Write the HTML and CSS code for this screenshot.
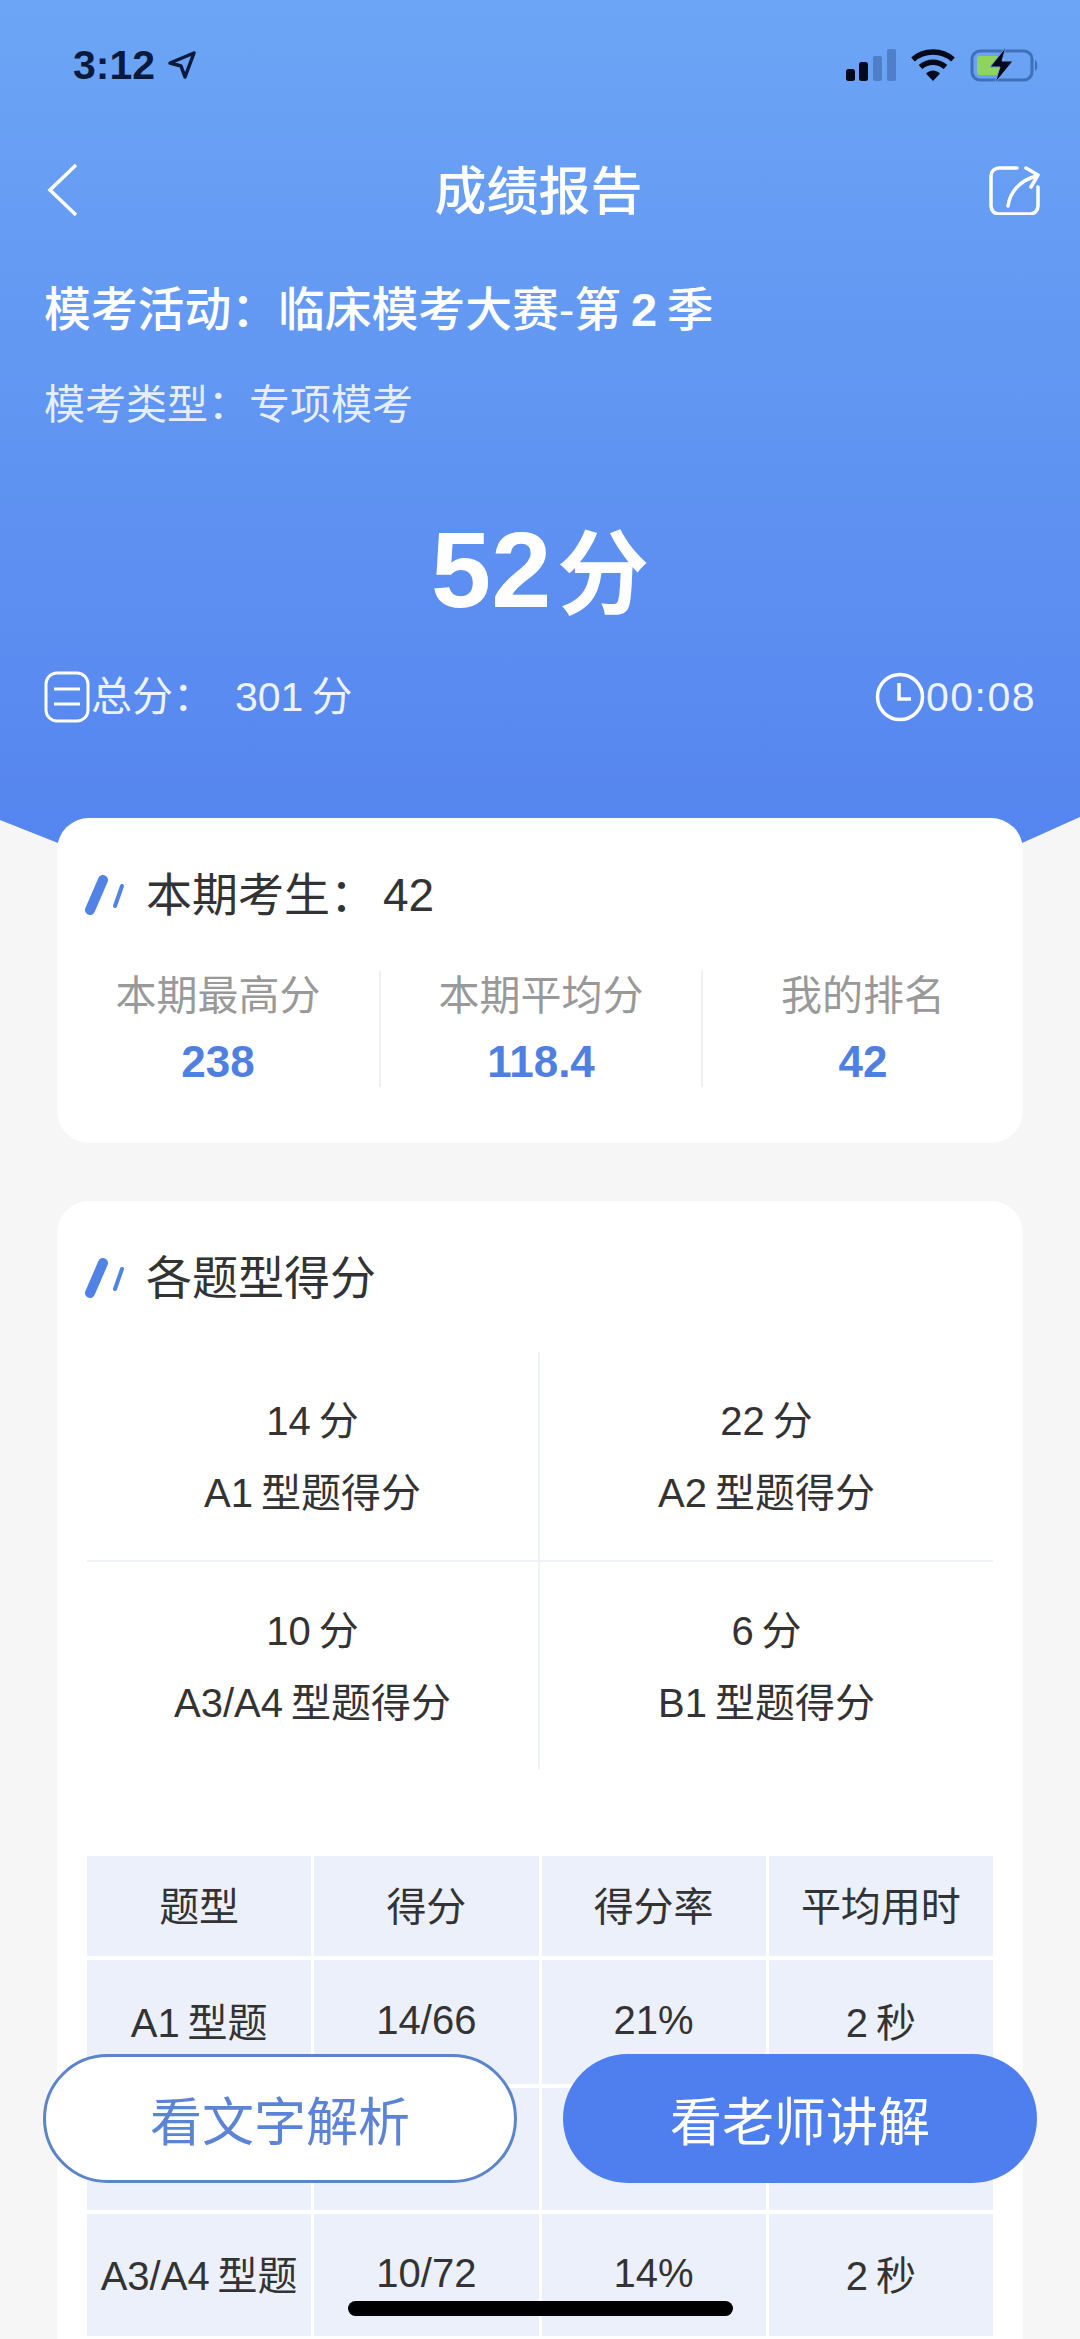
FILE: index.html
```html
<!DOCTYPE html>
<html lang="zh-CN">
<head>
    <meta charset="UTF-8">
    <meta name="viewport" content="width=device-width, initial-scale=1.0">
    <title>成绩报告</title>
    <link rel="stylesheet" href="styles.css">
</head>
<body>
    <div class="hero">
        <div class="status-bar">
            <div class="status-time">
                <span>3:12</span>
                <svg width="30" height="30" viewBox="0 0 30 30"><path d="M27 3 3 13l11 3 4 11z" fill="none" stroke="#0a1a3c" stroke-width="3.5" stroke-linejoin="round"/></svg>
            </div>
            <div class="status-icons">
                <svg width="50" height="32" viewBox="0 0 50 32">
                    <rect x="0" y="20" width="9" height="12" rx="2.5" fill="#050a1a"/>
                    <rect x="13" y="13" width="9" height="19" rx="2.5" fill="#050a1a"/>
                    <rect x="27" y="7" width="9" height="25" rx="2" fill="#4f7fc9"/>
                    <rect x="41" y="0" width="9" height="32" rx="2" fill="#4f7fc9"/>
                </svg>
                <svg width="44" height="32" viewBox="0 0 44 32">
                    <path d="M2 10.5C13 .5 31 .5 42 10.5" fill="none" stroke="#050a1a" stroke-width="5.5"/>
                    <path d="M9.5 18c7.500-6.500 17.500-6.500 25 0" fill="none" stroke="#050a1a" stroke-width="5.500"/>
                    <path d="M15 24.500c4.500-4 9.500-4 14 0l-7 7.500z" fill="#050a1a"/>
                </svg>
                <svg class="battery" width="72" height="36" viewBox="0 0 72 36">
                    <rect x="2" y="4" width="60" height="29" rx="8" fill="none" stroke="#3f70b8" stroke-width="3"/>
                    <rect x="7" y="9" width="27" height="19" rx="3" fill="#8fd45c"/>
                    <path d="M65 13c3 1 3 10 0 11z" fill="#3f70b8"/>
                    <path d="M36 0 20 20h10l-5 16 18-22H32z" fill="#050a1a" stroke="#6a9ff3" stroke-width="1"/>
                </svg>
            </div>
        </div>

        <div class="nav">
            <svg width="32" height="54" viewBox="0 0 32 54"><path d="M30 2 4 27l26 25" fill="none" stroke="#fff" stroke-width="3.500"/></svg>
            <span class="nav-title">成绩报告</span>
            <svg width="52" height="50" viewBox="0 0 52 50">
                <path d="M28 3H10a8 8 0 0 0-8 8v30a8 8 0 0 0 8 8h31a8 8 0 0 0 8-8V22" fill="none" stroke="#fff" stroke-width="3.500" stroke-linecap="round"/>
                <path d="M19 41c2-14 12-26 29-30M37 3l12 7-7 12" fill="none" stroke="#fff" stroke-width="3.500" stroke-linecap="round" stroke-linejoin="round"/>
            </svg>
        </div>

        <div class="activity">模考活动：临床模考大赛-第 <b>2</b> 季</div>
        <div class="exam-type">模考类型：专项模考</div>
        <div class="score">52 <span class="score-unit">分</span></div>

        <div class="summary">
            <div class="summary-item">
                <svg width="46" height="52" viewBox="0 0 46 52">
                    <rect x="2" y="2" width="42" height="48" rx="11" fill="none" stroke="#fff" stroke-width="3"/>
                    <path d="M10 18h26M10 33h26" stroke="#fff" stroke-width="3"/>
                </svg>
                <span>总分：</span>
                <span class="total">301 分</span>
            </div>
            <div class="summary-item">
                <svg width="50" height="50" viewBox="0 0 50 50">
                    <circle cx="25" cy="25" r="22.500" fill="none" stroke="#fff" stroke-width="3.500"/>
                    <path d="M24 11v16h12" fill="none" stroke="#fff" stroke-width="3.500"/>
                </svg>
                <span class="duration">00:08</span>
            </div>
        </div>
    </div>

    <div class="card card-ranking">
        <div class="card-title">
            <svg width="42" height="40" viewBox="0 0 42 40">
                <path d="M6 35 19 5" stroke="#5182e6" stroke-width="10" stroke-linecap="round"/>
                <path d="M31 31 38 11" stroke="#5182e6" stroke-width="4" stroke-linecap="round"/>
            </svg>
            <span>本期考生：<span class="count">42</span></span>
        </div>
        <div class="stats">
            <div class="stat">
                <div class="stat-label">本期最高分</div>
                <div class="stat-value">238</div>
            </div>
            <div class="stat">
                <div class="stat-label">本期平均分</div>
                <div class="stat-value">118.4</div>
            </div>
            <div class="stat">
                <div class="stat-label">我的排名</div>
                <div class="stat-value">42</div>
            </div>
        </div>
    </div>

    <div class="card card-types">
        <div class="card-title">
            <svg width="42" height="40" viewBox="0 0 42 40">
                <path d="M6 35 19 5" stroke="#5182e6" stroke-width="10" stroke-linecap="round"/>
                <path d="M31 31 38 11" stroke="#5182e6" stroke-width="4" stroke-linecap="round"/>
            </svg>
            <span>各题型得分</span>
        </div>

        <div class="type-grid">
            <div class="type-cell">
                <div>14 分</div>
                <div>A1 型题得分</div>
            </div>
            <div class="type-cell">
                <div>22 分</div>
                <div>A2 型题得分</div>
            </div>
            <div class="type-cell">
                <div>10 分</div>
                <div>A3/A4 型题得分</div>
            </div>
            <div class="type-cell">
                <div>6 分</div>
                <div>B1 型题得分</div>
            </div>
        </div>

        <div class="score-table">
            <div class="th">题型</div>
            <div class="th">得分</div>
            <div class="th">得分率</div>
            <div class="th">平均用时</div>

            <div class="td">A1 型题</div>
            <div class="td">14/66</div>
            <div class="td">21%</div>
            <div class="td">2 秒</div>

            <div class="td"></div>
            <div class="td"></div>
            <div class="td"></div>
            <div class="td"></div>

            <div class="td">A3/A4 型题</div>
            <div class="td">10/72</div>
            <div class="td">14%</div>
            <div class="td">2 秒</div>
        </div>
    </div>

    <div class="actions">
        <button class="action action-outline">看文字解析</button>
        <button class="action action-solid">看老师讲解</button>
    </div>
    <div class="home-bar"></div>
</body>
</html>
```

FILE: styles.css
```css
html, body {
    height: 2339px;
    margin: 0;
    overflow: hidden;
}
body {
    position: relative;
    font-family: "Liberation Sans", "Noto Sans CJK SC", sans-serif;
    word-spacing: -0.2em;
    background-color: #F6F6F7;
    color: #333333;
}
svg {
    display: block;
    flex: none;
}

.hero {
    box-sizing: border-box;
    height: 845px;
    padding: 44px 44px 0;
    color: #FFFFFF;
    background: linear-gradient(#6CA5F5, #5585EF);
    clip-path: polygon(0 0, 100% 0, 100% 817px, 1022px 843px, 58px 843px, 0 820px);
}
.status-bar {
    display: flex;
    justify-content: space-between;
    align-items: center;
    height: 42px;
    padding-left: 29px;
    color: #0A1A3C;
}
.status-time {
    display: flex;
    align-items: center;
    gap: 12px;
    font-size: 41px;
    font-weight: bold;
}
.status-icons {
    display: flex;
    align-items: center;
    gap: 15px;
    margin-right: -6px;
}
.nav {
    display: flex;
    justify-content: space-between;
    align-items: center;
    height: 60px;
    margin-top: 74px;
    padding-left: 2px;
    margin-right: -5px;
}
.nav-title {
    margin-left: 10px;
    padding-bottom: 6px;
    font-size: 52px;
    font-weight: 500;
}
.activity {
    margin-top: 60px;
    font-size: 46.800px;
    line-height: 60px;
    font-weight: 500;
}
.exam-type {
    margin-top: 40px;
    font-size: 41px;
    line-height: 50px;
    color: #E6EEFD;
}
.score {
    margin-top: 80px;
    font-size: 108px;
    line-height: 120px;
    font-weight: bold;
    word-spacing: -0.225em;
    text-align: center;
}
.score-unit {
    font-size: 92px;
}
.summary {
    display: flex;
    justify-content: space-between;
    margin-top: 36px;
    font-size: 41px;
    line-height: 52px;
    color: #EDF3FE;
}
.summary-item {
    display: flex;
    align-items: center;
    gap: 1px;
}
.total {
    margin-left: 20px;
}
.duration {
    letter-spacing: 1.500px;
}

.card {
    margin: 0 57px;
    background-color: #FFFFFF;
    border-radius: 32px;
}
.card-ranking {
    margin-top: -27px;
    padding: 47px 0 56px;
    position: relative;
}
.card-types {
    margin-top: 58px;
    padding: 47px 30px 60px;
}
.card-title {
    display: flex;
    align-items: center;
    gap: 20px;
    font-size: 46px;
    line-height: 60px;
}
.card-ranking .card-title {
    padding-left: 27px;
}
.card-types .card-title {
    margin-left: -3px;
}
.count {
    margin-left: 7px;
}

.stats {
    display: grid;
    grid-template-columns: repeat(3, 1fr);
    margin-top: 46px;
    text-align: center;
}
.stat {
    height: 116px;
    border-left: 2px solid #EEF0F3;
}
.stat:first-child {
    border-left: none;
}
.stat-label {
    font-size: 41px;
    line-height: 50px;
    color: #999999;
}
.stat-value {
    margin-top: 16px;
    font-size: 44px;
    line-height: 50px;
    font-weight: bold;
    color: #4F7FE0;
}

.type-grid {
    display: grid;
    grid-template-columns: 1fr 1fr;
    margin-top: 44px;
    text-align: center;
    font-size: 40px;
    line-height: 50px;
}
.type-cell {
    display: flex;
    flex-direction: column;
    gap: 22px;
    height: 207px;
    padding-top: 44px;
    box-sizing: border-box;
}
.type-cell:nth-child(odd) {
    border-right: 2px solid #EEF1F5;
}
.type-cell:nth-child(-n+2) {
    border-bottom: 2px solid #EEF1F5;
    height: 210px;
}

.score-table {
    display: grid;
    grid-template-columns: repeat(4, 1fr);
    grid-template-rows: 100px 124px 122px 122px;
    gap: 4px 3px;
    margin-top: 87px;
    font-size: 40px;
}
.th, .td {
    display: flex;
    justify-content: center;
    align-items: center;
    padding-bottom: 4px;
    box-sizing: border-box;
    background-color: #EBF0FB;
}

.actions {
    position: absolute;
    left: 43px;
    top: 2054px;
    display: flex;
    gap: 46px;
}
.action {
    width: 474px;
    height: 129px;
    font-family: inherit;
    font-size: 52px;
    border-radius: 65px;
    box-sizing: border-box;
}
.action-outline {
    background-color: #FFFFFF;
    border: 3px solid #5B84CC;
    color: #5B84D6;
}
.action-solid {
    background-color: #4F7FEE;
    border: none;
    color: #FFFFFF;
}
.home-bar {
    position: absolute;
    left: 348px;
    top: 2301px;
    width: 385px;
    height: 15px;
    background-color: #000000;
    border-radius: 8px;
}
```
